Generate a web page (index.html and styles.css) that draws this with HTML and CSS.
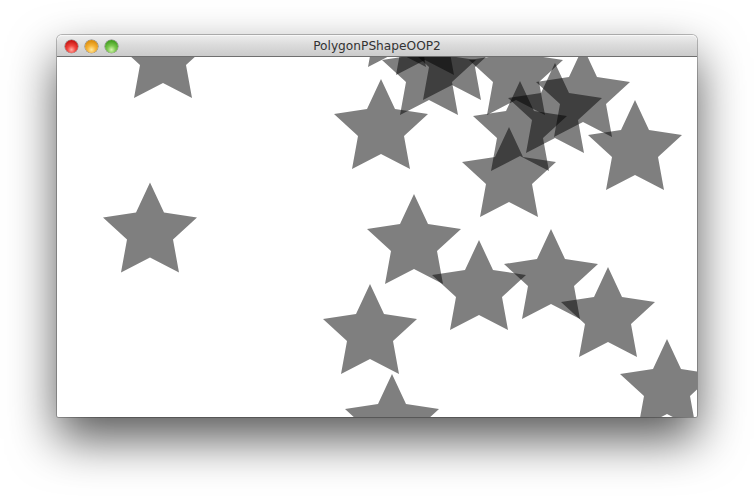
FILE: index.html
```html
<!DOCTYPE html>
<html>
<head>
<meta charset="utf-8">
<title>PolygonPShapeOOP2</title>
<link rel="stylesheet" href="styles.css">
</head>
<body>
<div class="desk">
  <div class="window">
    <div class="titlebar">
      <div class="lights">
        <span class="light red"></span>
        <span class="light yellow"></span>
        <span class="light green"></span>
      </div>
      <div class="title">PolygonPShapeOOP2</div>
    </div>
    <svg class="canvas" width="640" height="360" viewBox="0 0 640 360" xmlns="http://www.w3.org/2000/svg" xmlns:xlink="http://www.w3.org/1999/xlink">
      <defs>
        <polygon id="star" points="0,-50 14,-20 47,-15 23,7 29,40 0,25 -29,40 -23,7 -47,-15 -14,-20"/>
      </defs>
      <g class="stars">
        <use href="#star" xlink:href="#star" x="106" y="1"/>
        <use href="#star" xlink:href="#star" x="93" y="175.5"/>
        <use href="#star" xlink:href="#star" x="324" y="72"/>
        <use href="#star" xlink:href="#star" x="578" y="93"/>
        <use href="#star" xlink:href="#star" x="452" y="120"/>
        <use href="#star" xlink:href="#star" x="357" y="187"/>
        <use href="#star" xlink:href="#star" x="422" y="233"/>
        <use href="#star" xlink:href="#star" x="494" y="222"/>
        <use href="#star" xlink:href="#star" x="551" y="260"/>
        <use href="#star" xlink:href="#star" x="313" y="277"/>
        <use href="#star" xlink:href="#star" x="335" y="367"/>
        <use href="#star" xlink:href="#star" x="610" y="332"/>
        <use href="#star" xlink:href="#star" x="372" y="18"/>
        <use href="#star" xlink:href="#star" x="395" y="3"/>
        <use href="#star" xlink:href="#star" x="459" y="18"/>
        <use href="#star" xlink:href="#star" x="463" y="74"/>
        <use href="#star" xlink:href="#star" x="526" y="40"/>
        <use href="#star" xlink:href="#star" x="498" y="56"/>
        <use href="#star" xlink:href="#star" x="368" y="-22"/>
        <use href="#star" xlink:href="#star" x="340" y="-30"/>
      </g>
    </svg>
  </div>
</div>
</body>
</html>
```
FILE: styles.css
```css
html, body {
  margin: 0;
  padding: 0;
  background: #ffffff;
}
.desk {
  width: 754px;
  height: 496px;
  padding: 35px 57px 0 57px;
  box-sizing: border-box;
  overflow: hidden;
}
.window {
  width: 640px;
  border-radius: 5px 5px 2px 2px;
  box-shadow: 0 0 0 1px rgba(0,0,0,0.25), 0 22px 48px rgba(0,0,0,0.66);
  background: #fff;
  overflow: hidden;
}
.titlebar {
  height: 21px;
  position: relative;
  display: flex;
  align-items: center;
  justify-content: center;
  background: linear-gradient(#eeeeee, #dcdcdc 45%, #cbcbcb);
  border-bottom: 1px solid #6f6f6f;
  border-radius: 5px 5px 0 0;
  box-shadow: inset 0 1px 0 #f8f8f8;
}
.lights {
  position: absolute;
  left: 7.5px;
  top: 4.5px;
  display: flex;
  gap: 7px;
}
.light {
  width: 13px;
  height: 13px;
  border-radius: 50%;
  box-sizing: border-box;
  box-shadow: 0 0 0 0.5px rgba(0,0,0,0.45), 0 1px 1px rgba(255,255,255,0.6);
}
.red {
  background: radial-gradient(circle at 50% 75%, #ffb0a8 0%, #f2453e 35%, #c1120f 80%, #8c0a08 100%);
}
.yellow {
  background: radial-gradient(circle at 50% 75%, #ffeaa0 0%, #f7b53a 35%, #d98a0a 80%, #a56405 100%);
}
.green {
  background: radial-gradient(circle at 50% 75%, #d6f5b0 0%, #7cc850 35%, #3d9a1c 80%, #256c0f 100%);
}
.title {
  font-family: "DejaVu Sans", "Lucida Grande", sans-serif;
  font-size: 12.2px;
  color: #333333;
  letter-spacing: 0;
  padding-top: 1px;
}
.canvas {
  display: block;
  width: 640px;
  height: 360px;
  background: #fff;
}
.stars use {
  fill: #000;
  fill-opacity: 0.5;
}
```
